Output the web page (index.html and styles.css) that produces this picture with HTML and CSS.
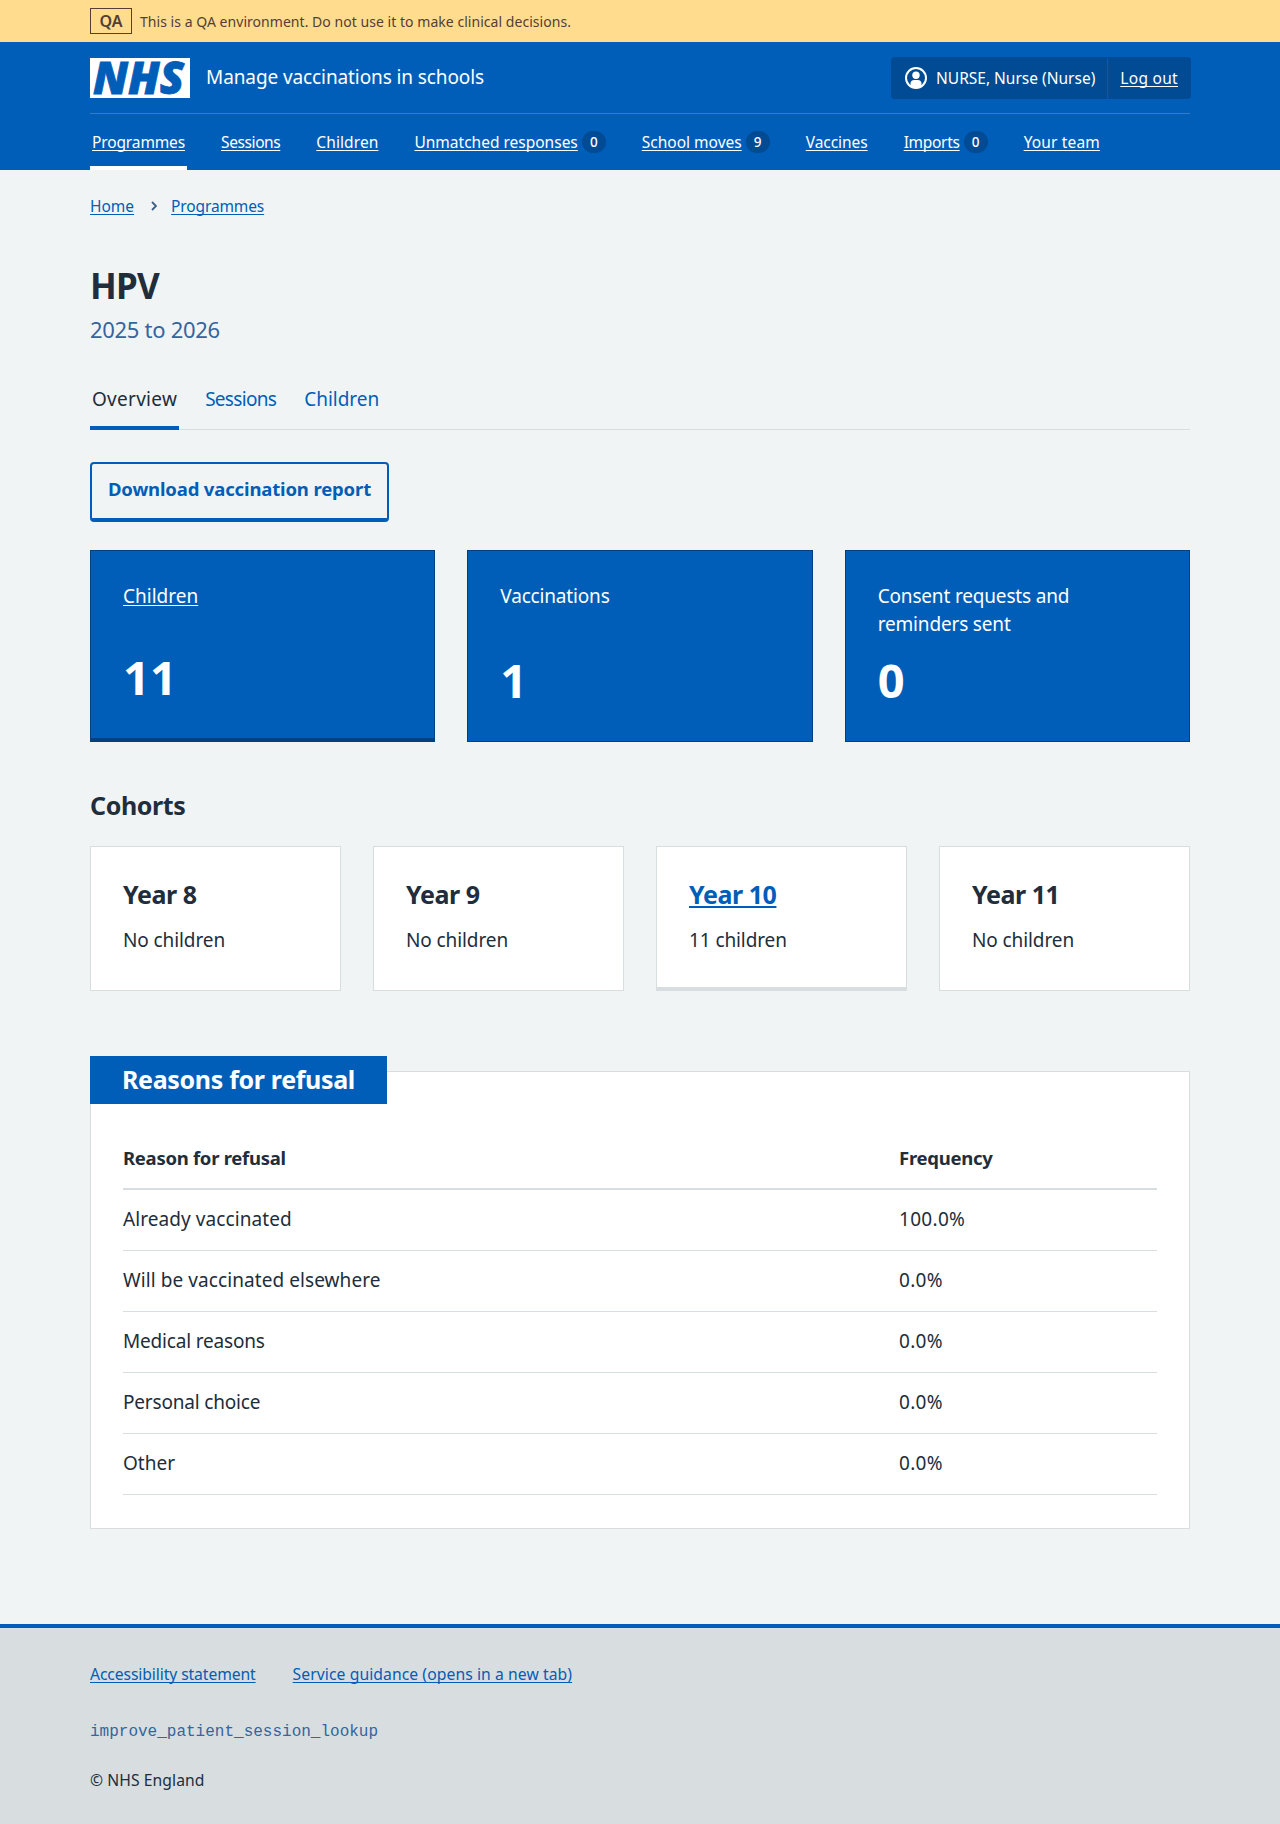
FILE: index.html
```html
<!DOCTYPE html>
<html lang="en">
<head>
<meta charset="utf-8">
<title>HPV – Manage vaccinations in schools</title>
<link rel="stylesheet" href="styles.css">
</head>
<body>
<div class="env"><div class="container env-in"><strong class="env-tag">QA</strong><span class="env-text">This is a QA environment. Do not use it to make clinical decisions.</span></div></div>
<header class="header">
  <div class="container">
    <div class="header-top">
      <svg class="logo" width="100" height="40" viewBox="0 0 100 40" role="img" aria-label="NHS"><rect width="100" height="40" fill="#fff"/><text class="logo-text" x="3" y="36" textLength="91" lengthAdjust="spacingAndGlyphs">NHS</text></svg>
      <span class="service">Manage vaccinations in schools</span>
      <div class="account">
        <div class="account-user"><svg width="22" height="22" viewBox="0 0 22 22"><circle cx="11" cy="11" r="10" fill="none" stroke="#fff" stroke-width="2"/><circle cx="11" cy="8.2" r="3.7" fill="#fff"/><path d="M5.5 19v-2.200a3.800 3.800 0 0 1 3.800-3.800h3.400a3.800 3.800 0 0 1 3.800 3.800V19A10 10 0 0 1 5.500 19z" fill="#fff"/></svg><span>NURSE, Nurse (Nurse)</span></div>
        <a class="account-out" href="#">Log out</a>
      </div>
    </div>
    <nav class="nav">
      <div class="nav-item current"><a class="t-prog" href="#">Programmes</a></div>
      <div class="nav-item"><a class="t-sess" href="#">Sessions</a></div>
      <div class="nav-item"><a class="t-child" href="#">Children</a></div>
      <div class="nav-item"><a href="#">Unmatched responses</a><span class="count">0</span></div>
      <div class="nav-item"><a href="#">School moves</a><span class="count">9</span></div>
      <div class="nav-item"><a class="t-vacc" href="#">Vaccines</a></div>
      <div class="nav-item"><a class="t-imp" href="#">Imports</a><span class="count">0</span></div>
      <div class="nav-item"><a class="t-team" href="#">Your team</a></div>
    </nav>
  </div>
</header>
<main class="container">
  <nav class="crumbs"><a href="#">Home</a><svg width="6" height="10" viewBox="0 0 6 10"><path d="M1 1l4 4-4 4" fill="none" stroke="#3c5f86" stroke-width="1.800"/></svg><a class="t-prog" href="#">Programmes</a></nav>
  <h1 class="title">HPV</h1>
  <p class="caption">2025 to 2026</p>
  <nav class="tabs">
    <a class="tab active" href="#">Overview</a><a class="tab tab-sess" href="#">Sessions</a><a class="tab" href="#">Children</a>
  </nav>
  <a class="button" href="#">Download vaccination report</a>
  <div class="stats">
    <div class="stat stat-link"><a href="#">Children</a><strong>11</strong></div>
    <div class="stat"><span>Vaccinations</span><strong>1</strong></div>
    <div class="stat"><span>Consent requests and reminders sent</span><strong>0</strong></div>
  </div>
  <h2 class="heading">Cohorts</h2>
  <div class="cohorts">
    <div class="cohort"><h3>Year 8</h3><p>No children</p></div>
    <div class="cohort"><h3>Year 9</h3><p>No children</p></div>
    <div class="cohort cohort-link"><h3><a href="#">Year 10</a></h3><p>11 children</p></div>
    <div class="cohort"><h3>Year 11</h3><p>No children</p></div>
  </div>
  <section class="reasons">
    <h2 class="reasons-title">Reasons for refusal</h2>
    <table>
      <thead><tr><th class="reason">Reason for refusal</th><th>Frequency</th></tr></thead>
      <tbody>
        <tr><td class="loose">Already vaccinated</td><td class="number">100.0%</td></tr>
        <tr><td class="loose">Will be vaccinated elsewhere</td><td class="number">0.0%</td></tr>
        <tr><td class="tight">Medical reasons</td><td class="number">0.0%</td></tr>
        <tr><td class="tight">Personal choice</td><td class="number">0.0%</td></tr>
        <tr><td>Other</td><td class="number">0.0%</td></tr>
      </tbody>
    </table>
  </section>
</main>
<footer class="footer">
  <div class="container">
    <div class="footer-links"><a class="footer-access" href="#">Accessibility statement</a><a class="loose" href="#">Service guidance (opens in a new tab)</a></div>
    <code>improve_patient_session_lookup</code>
    <p>© NHS England</p>
  </div>
</footer>
</body>
</html>
```
FILE: styles.css
```css
* { box-sizing: border-box; }
body { margin: 0; background: #f0f4f5; color: #212d3b; font: 19px/28px "Noto Sans", "Open Sans", sans-serif; }
h1, h2, h3, p { margin: 0; }
a { color: #005eb8; text-underline-offset: 2px; text-decoration-thickness: 1px; text-decoration-skip-ink: none; }
.container { width: 1100px; margin: 0 auto; }
.loose { letter-spacing: .08px; }
.tight { letter-spacing: -.18px; }

.env { height: 42px; background: #ffdc8e; color: #543e37; font-size: 14px; line-height: 24px; letter-spacing: .04px; }
.env-in { display: flex; align-items: center; gap: 8px; height: 42px; }
.env-text { padding-top: 1px; }
.env-tag { width: 42px; height: 26px; border: 1px solid #543e37; text-align: center; font-size: 16px; font-weight: 600; line-height: 24px; }

.header { height: 128px; background: #005eb8; color: #fff; }
.header a { color: #fff; }
.header-top { display: flex; align-items: center; height: 72px; border-bottom: 1px solid #337ec6; }
.logo { overflow: visible; }
.logo-text { font: italic 800 44px "Open Sans", "Noto Sans", sans-serif; fill: #005eb8; stroke: #005eb8; stroke-width: .8; }
.service { margin-left: 16px; padding-bottom: 2px; letter-spacing: -.1px; }
.account { display: flex; align-items: center; height: 42px; margin: 0 -1px 0 auto; background: #004b93; border-radius: 4px; font-size: 15.5px; }
.account-user { display: flex; align-items: center; gap: 9px; height: 40px; padding: 0 12px 0 14px; border-right: 1px solid #005eb8; }
.account-out { padding: 0 13px 0 12px; letter-spacing: .3px; }
.nav { display: flex; gap: 32px; height: 56px; font-size: 15.5px; }
.nav-item { display: flex; align-items: center; gap: 4px; padding: 0 2px; }
.current { box-shadow: inset 0 -4px #fff; }
.count { width: 24px; height: 22px; border-radius: 12px; background: #004b93; font-size: 13.5px; font-weight: 500; line-height: 22px; text-align: center; }
.t-prog { letter-spacing: -.13px; }
.t-sess { letter-spacing: -.4px; }
.t-child { letter-spacing: .1px; }
.t-vacc { letter-spacing: -.05px; }
.t-imp { letter-spacing: -.3px; }
.t-team { letter-spacing: .15px; }

.crumbs { display: flex; align-items: center; height: 24px; margin-top: 24px; font-size: 15.5px; line-height: 24px; }
.crumbs svg { margin: 0 14px 0 17px; }
.title { margin-top: 45px; font-size: 35px; font-weight: 700; line-height: 46px; letter-spacing: -.8px; }
.caption { margin-top: 4px; color: #33659e; font-size: 22px; line-height: 32px; letter-spacing: -.3px; }
.tabs { display: flex; gap: 24px; height: 55px; margin-top: 30px; box-shadow: inset 0 -1px #d8dde0; }
.tab { padding: 10px 2px 0; text-decoration: none; }
.active { color: #212d3b; letter-spacing: .28px; box-shadow: inset 0 -4px #005eb8; }
.tab-sess { letter-spacing: -.7px; }
.button { display: flex; align-items: center; justify-content: center; width: 299px; height: 60px; margin-top: 32px; padding-bottom: 4px; border: 2px solid #005eb8; border-bottom-width: 4px; border-radius: 4px; font-size: 18.5px; font-weight: 700; letter-spacing: -.15px; text-decoration: none; }

.stats { display: grid; grid-template-columns: repeat(3, 1fr); gap: 32px; margin-top: 28px; }
.stat { display: flex; flex-direction: column; justify-content: space-between; height: 192px; padding: 31px 32px 34px; border: 1px solid #004281; background: #005eb8; color: #fff; }
.stat a { color: #fff; }
.stat span { letter-spacing: -.17px; }
.stat strong { font-size: 47px; font-weight: 700; line-height: 54px; }
.stat-link { border-bottom-width: 4px; }

.heading { margin-top: 46px; font-size: 25px; font-weight: 700; line-height: 34px; letter-spacing: -.4px; }
.cohorts { display: grid; grid-template-columns: repeat(4, 1fr); gap: 32px; margin-top: 24px; }
.cohort { height: 145px; padding: 32px; border: 1px solid #d8dde0; background: #fff; }
.cohort h3 { font-size: 25px; font-weight: 700; line-height: 31px; letter-spacing: -.45px; }
.cohort h3 a { text-decoration-thickness: 2px; }
.cohort p { margin-top: 16px; letter-spacing: -.1px; }
.cohort-link { border-bottom-width: 4px; }

.reasons { height: 458px; margin-top: 80px; padding: 0 32px; border: 1px solid #d8dde0; background: #fff; }
.reasons-title { width: 297px; height: 48px; margin: -16px 0 0 -33px; padding-left: 32px; background: #005eb8; color: #fff; font-size: 25px; font-weight: 700; line-height: 47px; letter-spacing: -.33px; }
table { width: 100%; margin-top: 24px; border-collapse: collapse; }
th, td { height: 61px; padding: 0 0 1px; border-bottom: 1px solid #d8dde0; text-align: left; }
th { border-bottom-width: 2px; font-size: 18.5px; font-weight: 700; letter-spacing: -.28px; }
.reason { width: 776px; }
.number { letter-spacing: .3px; }

.footer { height: 200px; margin-top: 95px; border-top: 4px solid #005eb8; background: #d8dde0; font-size: 15.7px; line-height: 24px; }
.footer-links { display: flex; gap: 37px; padding-top: 34px; }
.footer-access { letter-spacing: -.1px; }
.footer code { display: block; margin-top: 34px; color: #33659e; font: 16px/24px "Liberation Mono", monospace; }
.footer p { margin-top: 24px; letter-spacing: .07px; }
```
